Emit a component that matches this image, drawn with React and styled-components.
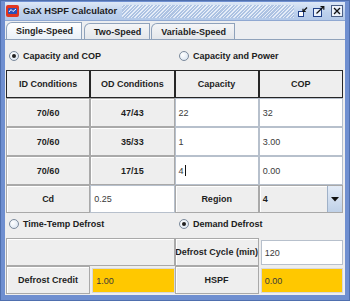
import React from "react";
import styled, { createGlobalStyle } from "styled-components";

const Global = createGlobalStyle`
  html, body { margin: 0; padding: 0; background: #6f8fd0; }
  * { box-sizing: border-box; }
`;

const FONT = `"Liberation Sans", Arial, sans-serif`;

const Frame = styled.div`
  width: 350px;
  height: 301px;
  display: flex;
  flex-direction: column;
  padding: 1px 4px 5px 4px;
  background: #6f8fd0;
  border: 1px solid #4f6fae;
  font-family: ${FONT};
`;

const TitleBar = styled.div`
  height: 19px;
  display: flex;
  align-items: center;
  padding: 0 2px 0 1px;
  background: linear-gradient(#dde8f7, #bcd0ec 60%, #b3c9e9);
  border-bottom: 1px solid #8fa8d2;
`;

const AppIcon = styled.div`
  width: 13px;
  height: 12px;
  border-radius: 2px;
  background: #e2361f;
  display: flex;
  align-items: center;
  justify-content: center;
`;

const Title = styled.span`
  margin-left: 4px;
  font: bold 9.3px ${FONT};
  color: #1c1c1c;
  white-space: nowrap;
`;

const Grip = styled.div`
  flex: 1;
  height: 13px;
  margin: 0 4px 0 5px;
  background: repeating-linear-gradient(
    135deg,
    #eef3fb 0px,
    #eef3fb 1px,
    #a9bfe0 1px,
    #a9bfe0 2.5px
  );
  opacity: 0.8;
`;

const FrameButtons = styled.div`
  display: flex;
  align-items: center;
  gap: 5px;
`;

const FrameButton = styled.div`
  width: ${(p) => p.$w}px;
  height: 11px;
  display: flex;
  align-items: center;
  justify-content: center;
`;

const TabStrip = styled.div`
  height: 18px;
  display: flex;
  align-items: flex-end;
  padding-left: 1px;
  background: #eceef1;
`;

const Tab = styled.div`
  height: ${(p) => (p.$active ? 17 : 16)}px;
  margin-right: ${(p) => (p.$active ? 2 : 1)}px;
  padding: 0 8px 0 9px;
  display: flex;
  align-items: center;
  font: bold 9px ${FONT};
  color: #1e1e1e;
  border: 1px solid #8fa2bb;
  border-bottom: none;
  border-top-left-radius: 6px;
  background: ${(p) =>
    p.$active
      ? "linear-gradient(#ffffff, #e9f0f8)"
      : "linear-gradient(#f4f5f7, #e3e6ea)"};
`;

const Content = styled.div`
  flex: 1;
  display: flex;
  flex-direction: column;
  background: #eeeeee;
  border-top: 1px solid #8fa2bb;
  padding: 8px 4px 0 1px;
`;

const RadioRow = styled.div`
  display: grid;
  grid-template-columns: 170px 1fr;
  height: 16px;
  padding-left: 3px;
  margin: ${(p) => p.$m};
`;

const RadioOption = styled.label`
  display: flex;
  align-items: center;
  gap: 4px;
  font: bold 9px ${FONT};
  color: #202020;
`;

const RadioDot = styled.span`
  width: 10px;
  height: 10px;
  border-radius: 50%;
  border: 1px solid #7b8a9c;
  background: radial-gradient(circle at 35% 35%, #ffffff, #d4e0ee);
  display: flex;
  align-items: center;
  justify-content: center;
  &::after {
    content: "";
    width: 4px;
    height: 4px;
    border-radius: 50%;
    background: ${(p) => (p.$on ? "#202020" : "transparent")};
  }
`;

const Table = styled.div`
  display: grid;
  grid-template-columns: repeat(4, 1fr);
  grid-template-rows: ${(p) => p.$rows};
  width: 337px;
`;

const Cell = styled.div`
  display: flex;
  align-items: center;
  justify-content: center;
  min-width: 0;
  overflow: hidden;
  white-space: nowrap;
  font: bold 9px ${FONT};
  color: #1e1e1e;
  background: #eeeeee;
  border: 1px solid #a9a9a9;
  box-shadow: inset 1px 1px 0 #ffffff;
  grid-column: ${(p) => (p.$span ? `span ${p.$span}` : "auto")};
`;

const HeaderCell = styled(Cell)`
  border: 1px solid #262626;
  box-shadow: none;
`;

const Field = styled.div`
  display: flex;
  align-items: center;
  min-width: 0;
  overflow: hidden;
  padding-left: 3px;
  font: 9px ${FONT};
  color: #3a3a3a;
  background: ${(p) => (p.$tone === "yellow" ? "#ffc800" : "#ffffff")};
  border: 1px solid ${(p) => (p.$tone === "yellow" ? "#d8d8d8" : "#b7c0cc")};
  margin: ${(p) => (p.$inset ? "2px 0 1px 2px" : "0")};
`;

const Caret = styled.span`
  width: 1px;
  height: 11px;
  margin-left: 1px;
  background: #111;
`;

const Combo = styled.div`
  display: flex;
  min-width: 0;
  border: 1px solid #a9a9a9;
  background: #eeeeee;
`;

const ComboValue = styled.div`
  flex: 1;
  display: flex;
  align-items: center;
  padding-left: 3px;
  font: bold 9px ${FONT};
  color: #1e1e1e;
  box-shadow: inset 1px 1px 0 #ffffff;
`;

const ComboButton = styled.div`
  width: 15px;
  display: flex;
  align-items: center;
  justify-content: center;
  border-left: 1px solid #9fb1c8;
  background: linear-gradient(#e4ecf7, #bfd1e8);
`;

const DefrostBox = styled(Table)`
  margin-top: 6px;
`;

export default function App() {
  const rows = [
    ["70/60", "47/43", "22", "32", false],
    ["70/60", "35/33", "1", "3.00", false],
    ["70/60", "17/15", "4", "0.00", true],
  ];
  return (
    <>
      <Global />
      <Frame>
        <TitleBar>
          <AppIcon>
            <svg width="9" height="6" viewBox="0 0 9 6">
              <rect x="0" y="0" width="9" height="6" rx="1" fill="#2a4fb8" />
              <path d="M1 4 L3 1.5 L5 3.5 L8 1" stroke="#fff" strokeWidth="1" fill="none" />
            </svg>
          </AppIcon>
          <Title>GaX HSPF Calculator</Title>
          <Grip />
          <FrameButtons>
            <FrameButton $w={10}>
              <svg width="10" height="11" viewBox="0 0 10 11">
                <rect x="0.5" y="5.5" width="5" height="5" fill="#fff" stroke="#1f3f86" />
                <path d="M9 1.5 L5.5 5" stroke="#111" strokeWidth="1.2" />
                <path d="M5 2.8 L5 5.5 L7.7 5.5" stroke="#111" strokeWidth="1.2" fill="none" />
              </svg>
            </FrameButton>
            <FrameButton $w={12}>
              <svg width="12" height="11" viewBox="0 0 12 11">
                <rect x="0.5" y="2.5" width="8" height="8" fill="#e8f0fb" stroke="#1f3f86" />
                <path d="M3.5 7.5 L10.5 0.8" stroke="#111" strokeWidth="1.2" />
                <path d="M7.5 0.6 L10.8 0.6 L10.8 3.8" stroke="#111" strokeWidth="1.2" fill="none" />
              </svg>
            </FrameButton>
            <FrameButton $w={13}>
              <svg width="12" height="12" viewBox="0 0 12 12">
                <rect x="0.5" y="0.5" width="11" height="11" fill="#dce7f6" stroke="#4a5f86" />
                <rect x="2" y="2" width="8" height="8" fill="none" stroke="#fff" />
                <path d="M3 3 L9 9 M9 3 L3 9" stroke="#111" strokeWidth="1.3" />
              </svg>
            </FrameButton>
          </FrameButtons>
        </TitleBar>

        <TabStrip>
          <Tab $active>Single-Speed</Tab>
          <Tab>Two-Speed</Tab>
          <Tab>Variable-Speed</Tab>
        </TabStrip>

        <Content>
          <RadioRow $m="0 0 6px 0">
            <RadioOption>
              <RadioDot $on />
              Capacity and COP
            </RadioOption>
            <RadioOption>
              <RadioDot />
              Capacity and Power
            </RadioOption>
          </RadioRow>

          <Table $rows="28px 29px 29px 29px 28px">
            <HeaderCell>ID Conditions</HeaderCell>
            <HeaderCell>OD Conditions</HeaderCell>
            <HeaderCell>Capacity</HeaderCell>
            <HeaderCell>COP</HeaderCell>
            {rows.map(([id, od, cap, cop, caret], i) => (
              <React.Fragment key={i}>
                <Cell>{id}</Cell>
                <Cell>{od}</Cell>
                <Field>
                  {cap}
                  {caret && <Caret />}
                </Field>
                <Field>{cop}</Field>
              </React.Fragment>
            ))}
            <Cell>Cd</Cell>
            <Field>0.25</Field>
            <Cell>Region</Cell>
            <Combo>
              <ComboValue>4</ComboValue>
              <ComboButton>
                <svg width="8" height="5" viewBox="0 0 8 5">
                  <path d="M0 0 L8 0 L4 4.5 Z" fill="#111" />
                </svg>
              </ComboButton>
            </Combo>
          </Table>

          <RadioRow $m="3px 0 0 0">
            <RadioOption>
              <RadioDot />
              Time-Temp Defrost
            </RadioOption>
            <RadioOption>
              <RadioDot $on />
              Demand Defrost
            </RadioOption>
          </RadioRow>

          <DefrostBox $rows="28px 28px">
            <Cell $span={2} />
            <Cell>Defrost Cycle (min)</Cell>
            <Field $inset>120</Field>
            <Cell>Defrost Credit</Cell>
            <Field $inset $tone="yellow">1.00</Field>
            <Cell>HSPF</Cell>
            <Field $inset $tone="yellow">0.00</Field>
          </DefrostBox>
        </Content>
      </Frame>
    </>
  );
}
